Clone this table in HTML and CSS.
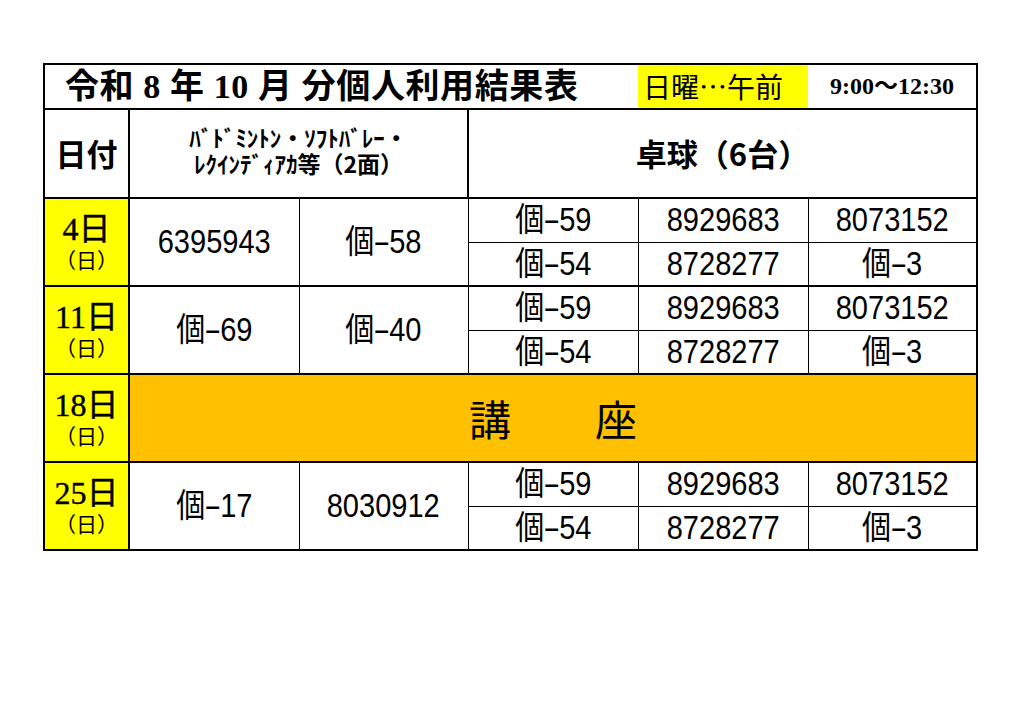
FILE: index.html
```html
<!DOCTYPE html>
<html lang="ja">
<head>
<meta charset="utf-8">
<title>令和8年10月分個人利用結果表</title>
<link rel="stylesheet" href="styles.css">
</head>
<body>
<div class="page">
<table class="sheet">
<colgroup>
<col class="c-date"><col class="c-a"><col class="c-b"><col class="c-a"><col class="c-a"><col class="c-b">
</colgroup>
<tr class="title-row">
<td colspan="4" class="title">令和 8 年 10 月 分個人利用結果表</td>
<td class="session">日曜…午前</td>
<td class="time">9:00～12:30</td>
</tr>
<tr class="head-row">
<th class="h-date">日付</th>
<th colspan="2" class="h-bad"><span class="hb-line">ﾊﾞﾄﾞﾐﾝﾄﾝ・ｿﾌﾄﾊﾞﾚｰ・</span><span class="hb-line">ﾚｸｲﾝﾃﾞｨｱｶ等（2面）</span></th>
<th colspan="3" class="h-tt">卓球（6台）</th>
</tr>

<tr class="grp">
<td rowspan="2" class="date"><span class="d">4日</span><span class="dow">（日）</span></td>
<td rowspan="2" class="val"><span class="v">6395943</span></td>
<td rowspan="2" class="val"><span class="v">個<span class="dash">-</span>58</span></td>
<td class="val"><span class="v">個<span class="dash">-</span>59</span></td>
<td class="val"><span class="v">8929683</span></td>
<td class="val"><span class="v">8073152</span></td>
</tr>
<tr class="sub">
<td class="val"><span class="v">個<span class="dash">-</span>54</span></td>
<td class="val"><span class="v">8728277</span></td>
<td class="val"><span class="v">個<span class="dash">-</span>3</span></td>
</tr>

<tr class="grp">
<td rowspan="2" class="date"><span class="d">11日</span><span class="dow">（日）</span></td>
<td rowspan="2" class="val"><span class="v">個<span class="dash">-</span>69</span></td>
<td rowspan="2" class="val"><span class="v">個<span class="dash">-</span>40</span></td>
<td class="val"><span class="v">個<span class="dash">-</span>59</span></td>
<td class="val"><span class="v">8929683</span></td>
<td class="val"><span class="v">8073152</span></td>
</tr>
<tr class="sub">
<td class="val"><span class="v">個<span class="dash">-</span>54</span></td>
<td class="val"><span class="v">8728277</span></td>
<td class="val"><span class="v">個<span class="dash">-</span>3</span></td>
</tr>

<tr class="grp lecture-row">
<td class="date"><span class="d">18日</span><span class="dow">（日）</span></td>
<td colspan="5" class="lecture">講　　座</td>
</tr>

<tr class="grp">
<td rowspan="2" class="date"><span class="d">25日</span><span class="dow">（日）</span></td>
<td rowspan="2" class="val"><span class="v">個<span class="dash">-</span>17</span></td>
<td rowspan="2" class="val"><span class="v">8030912</span></td>
<td class="val"><span class="v">個<span class="dash">-</span>59</span></td>
<td class="val"><span class="v">8929683</span></td>
<td class="val"><span class="v">8073152</span></td>
</tr>
<tr class="sub">
<td class="val"><span class="v">個<span class="dash">-</span>54</span></td>
<td class="val"><span class="v">8728277</span></td>
<td class="val"><span class="v">個<span class="dash">-</span>3</span></td>
</tr>
</table>
</div>
</body>
</html>
```

FILE: styles.css
```css
html, body {
  margin: 0;
  padding: 0;
  background: #ffffff;
}

body {
  font-family: "Liberation Sans", "Noto Sans CJK JP", sans-serif;
  color: #000000;
}

.page {
  padding: 63px 0 0 43px;
}

.sheet {
  border-collapse: collapse;
  table-layout: fixed;
  width: 933px;
  border: 2px solid #000000;
}

.c-date { width: 85px; }
.c-a { width: 170px; }
.c-b { width: 169px; }

.sheet td,
.sheet th {
  padding: 0;
  text-align: center;
  vertical-align: middle;
  border: 1px solid #000000;
  font-weight: normal;
  line-height: 1.1;
}

/* title row */
.title-row { height: 45px; }

.sheet .title-row > td {
  border-left: 0;
  border-right: 0;
  border-bottom: 2px solid #000000;
}

.sheet td.title {
  text-align: left;
  padding-left: 20px;
  font-family: "Liberation Serif", "Noto Sans CJK JP", serif;
  font-weight: bold;
  font-size: 34px;
  letter-spacing: 0.6px;
}

.sheet td.session {
  background: #ffff00;
  text-align: left;
  padding-left: 5px;
  font-family: "Noto Sans CJK JP", sans-serif;
  font-size: 28px;
}

.sheet td.time {
  font-family: "Liberation Serif", "Noto Sans CJK JP", serif;
  font-weight: bold;
  font-size: 24px;
}

/* header row */
.head-row { height: 89px; }

.sheet .head-row > th {
  border-bottom: 2px solid #000000;
  font-family: "Noto Sans CJK JP", sans-serif;
  font-weight: bold;
}

.sheet th.h-date {
  border-right: 2px solid #000000;
  font-size: 31px;
}

.sheet th.h-bad {
  border-right: 2px solid #000000;
  font-size: 23px;
  padding-bottom: 8px;
}

.hb-line {
  display: block;
  line-height: 26px;
}

.sheet th.h-tt {
  font-size: 31px;
}

/* data rows */
.grp, .sub { height: 44px; }
.lecture-row { height: 88px; }

.sheet .grp > td {
  border-top: 2px solid #000000;
}

.sheet td.date {
  background: #ffff00;
  border-right: 2px solid #000000;
}

.d {
  display: block;
  font-family: "Liberation Serif", "Noto Sans CJK JP", serif;
  font-size: 32px;
  line-height: 32px;
  -webkit-text-stroke: 0.4px #000000;
}

.dow {
  display: block;
  margin-top: 2px;
  font-family: "Noto Sans CJK JP", sans-serif;
  font-size: 21px;
  line-height: 24px;
}

.v {
  display: inline-block;
  font-size: 33px;
  transform: scaleX(0.88);
}

.dash {
  display: inline-block;
  margin: 0 3px;
  transform: scaleX(1.8);
}

.sheet td.lecture {
  background: #ffc000;
  font-family: "Noto Sans CJK JP", sans-serif;
  font-size: 42px;
}
```
